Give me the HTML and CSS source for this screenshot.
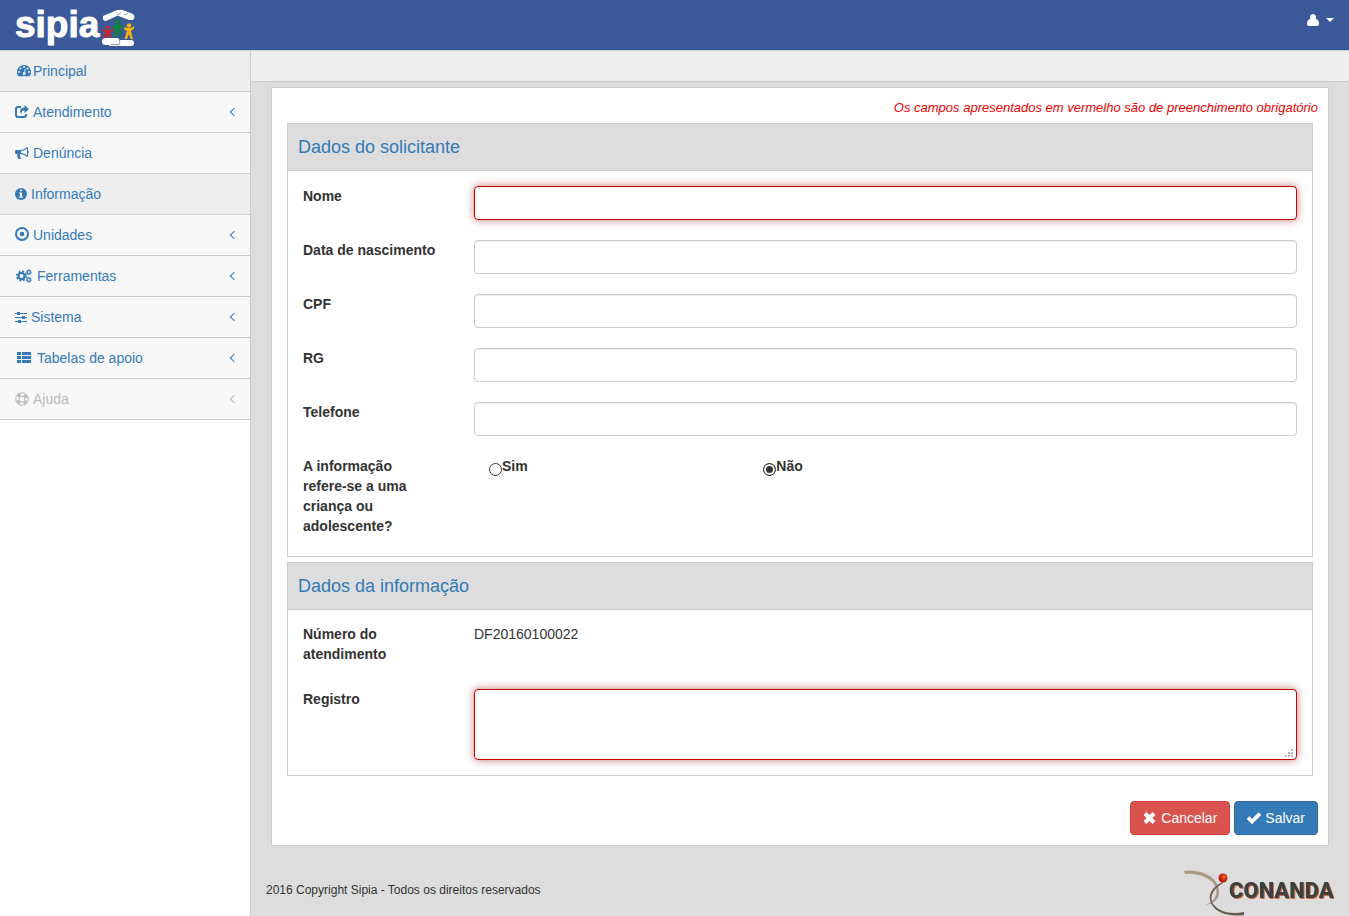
FILE: index.html
```html
<!DOCTYPE html>
<html lang="pt-BR">
<head>
<meta charset="utf-8">
<meta name="viewport" content="width=device-width, initial-scale=1">
<title>Sipia - Informação</title>
<link rel="stylesheet" href="styles.css">
</head>
<body>
<header class="navbar">
  <a class="brand" href="#" aria-label="Sipia">
    <svg width="122" height="50" viewBox="0 0 122 50">
      <text class="brand-text" x="0" y="37">sipia</text>
      <path fill="#fff" d="M88 16 101 10.500Q105 9 106 12L104 15 91 21Q87 21 88 16Z"/>
      <path fill="#fff" d="M102 11Q106 9 109 10.500L118 14Q121 17 118 20L114 20 101 15Z"/>
      <path fill="none" stroke="#3b5998" stroke-width=".6" d="M102 15.500 106 12.500M109 15 113 13.500"/>
      <circle fill="#c1272d" cx="92.500" cy="27.500" r="2"/>
      <path fill="#c1272d" d="M87 29 91 30H95L99 28.500 99 30.500 95 32 97 37.500H94.500L93 35 91 38H88L90.500 32 87 31Z"/>
      <circle fill="#108040" cx="102.500" cy="21.500" r="2.500"/>
      <path fill="#108040" d="M101 24H104.500L109 27.500 108 29 105 28 106 37H103.500L102.500 31 101 37H98.500L100 28 96.500 29 96 27.500Z"/>
      <circle fill="#f0b310" cx="114" cy="25.500" r="2.200"/>
      <path fill="#f0b310" d="M112.500 28H116L119 26V28.500L116 31 118 39H115.500L114 34 112 39H109.500L112 31 109 29.500 109.500 27Z"/>
      <rect fill="#fff" x="87" y="38" width="18" height="7" rx="3.500"/>
      <path fill="#fff" d="M103 40H116Q119 40 119 43T116 46H96Q94 46 94 45H103Z"/>
      <path fill="none" stroke="#3b5998" stroke-width=".6" d="M104 39.500Q106 42 104 44.500H96"/>
    </svg>
  </a>
  <button class="user" type="button" aria-label="Menu do usuário">
    <svg width="12" height="14" viewBox="0 0 12 14"><path fill="currentColor" d="M6 1a3.200 3.200 0 0 1 2.600 5c2.400.2 3.400 2.300 3.400 4.800 0 1.300-.7 2.200-1.900 2.200H1.900C.7 13 0 12.100 0 10.800 0 8.300 1 6.200 3.400 6A3.200 3.200 0 0 1 6 1Z"/></svg>
    <svg width="8" height="4" viewBox="0 0 8 4"><path fill="currentColor" d="M0 0h8L4 4Z"/></svg>
  </button>
</header>
<div class="wrapper">
  <nav class="sidebar" aria-label="Principal">
    <ul class="menu">
      <li><a class="item active" href="#"><svg class="wide" width="18" height="14" viewBox="-2 0 18 14"><path fill="currentColor" fill-rule="evenodd" d="M7 1a7 7 0 0 0-5.900 10.800q.3.400.6.400h10.600q.4 0 .6-.4A7 7 0 0 0 7 1ZM2 7a1 1 0 1 0 0 2 1 1 0 0 0 0-2Zm1.500-3.500a1 1 0 1 0 0 2 1 1 0 0 0 0-2ZM7 2a1 1 0 1 0 0 2 1 1 0 0 0 0-2Zm3.500 1.500a1 1 0 1 0 0 2 1 1 0 0 0 0-2ZM12 7a1 1 0 1 0 0 2 1 1 0 0 0 0-2ZM7.900 4.800 7.200 8a1.500 1.500 0 1 0 .9.300l.7-3.200Z"/></svg>Principal</a></li>
      <li><a class="item" href="#"><svg width="14" height="14" viewBox="0 0 14 14"><path fill="none" stroke="currentColor" stroke-width="2" d="M6 2H3Q1 2 1 4v6q0 2 2 2h6q2 0 2-2V9"/><path fill="currentColor" d="m9.500 0 4.500 4-4.500 4V5.500C7 5.500 6 6.800 6.800 9.300 4 6.800 4.500 2.500 9.500 2.500Z"/></svg><span>Atendimento</span><i class="angle"></i></a></li>
      <li><a class="item" href="#"><svg width="14" height="14" viewBox="0 0 14 14"><path fill="currentColor" fill-rule="evenodd" d="M13 5V2q0-1-1-1C10 2.800 8 4 5 4H1.200Q0 4 0 5.200v1.600Q0 8 1.200 8h1.200c-.4 1.500 0 3 .6 4.400.7.700 2.300.8 3.200 0-1-.8-1.400-1.500-.8-2.300-.7-.7-.7-1.300-.1-2C8 8.300 10 9.300 12 11q1 0 1-1V7q1 0 1-1t-1-1ZM12 9.600C10.200 8.200 8.200 7.300 6 7.100V4.900C8.200 4.700 10.200 3.800 12 2.400Z"/></svg><span>Denúncia</span></a></li>
      <li><a class="item active" href="#"><svg width="12" height="14" viewBox="0 0 12 14"><circle fill="currentColor" cx="6" cy="7" r="6"/><path fill="#eee" d="M5 2.500h2v1.800H5ZM4 5.500h3v4h1v1.300H4V9.500h1V6.800H4Z"/></svg><span>Informação</span></a></li>
      <li><a class="item" href="#"><svg width="14" height="14" viewBox="0 0 14 14"><circle fill="none" stroke="currentColor" stroke-width="2" cx="7" cy="6" r="6"/><circle fill="currentColor" cx="7" cy="6" r="2.300"/></svg><span>Unidades</span><i class="angle"></i></a></li>
      <li><a class="item" href="#"><svg width="18" height="14" viewBox="-1 0 18 14"><circle fill="none" stroke="currentColor" stroke-width="2" cx="5.500" cy="7" r="3"/><circle fill="none" stroke="currentColor" stroke-width="2" stroke-dasharray="2 1.530" cx="5.500" cy="7" r="4.500"/><g fill="none" stroke="currentColor"><circle stroke-width="1.300" cx="12.800" cy="3.200" r="1.600"/><circle stroke-width="1.300" cx="12.800" cy="10.800" r="1.600"/><circle stroke-width="1" stroke-dasharray="1.200 1" cx="12.800" cy="3.200" r="2.500"/><circle stroke-width="1" stroke-dasharray="1.200 1" cx="12.800" cy="10.800" r="2.500"/></g></svg><span>Ferramentas</span><i class="angle"></i></a></li>
      <li><a class="item" href="#"><svg width="12" height="14" viewBox="0 0 12 14"><path fill="currentColor" d="M0 3h12v1H0ZM0 7h12v1H0ZM0 11h12v1H0ZM2 2h3v3H2ZM7 6h3v3H7ZM3 10h3v3H3Z"/></svg><span>Sistema</span><i class="angle"></i></a></li>
      <li><a class="item" href="#"><svg width="18" height="14" viewBox="-2 0 18 14"><path fill="currentColor" d="M0 1h4v3H0ZM5 1h9v3H5ZM0 5h4v3H0ZM5 5h9v3H5ZM0 9h4v3H0ZM5 9h9v3H5Z"/></svg><span>Tabelas de apoio</span><i class="angle"></i></a></li>
      <li><a class="item disabled" href="#" aria-disabled="true"><svg width="14" height="14" viewBox="0 0 14 14"><g fill="none" stroke="currentColor"><circle cx="7" cy="7" r="6.300"/><circle cx="7" cy="7" r="3"/><circle cx="7" cy="7" r="4.700" stroke-width="3" stroke-dasharray="3.690 3.690" stroke-dashoffset="-1.850"/></g></svg><span>Ajuda</span><i class="angle"></i></a></li>
    </ul>
  </nav>
  <div class="page">
    <div class="strip"></div>
    <main class="card">
      <p class="hint">Os campos apresentados em vermelho são de preenchimento obrigatório</p>
      <form>
        <section class="panel">
          <h2 class="panel-title">Dados do solicitante</h2>
          <div class="panel-body">
            <div class="row"><label for="nome">Nome</label><input class="control required" id="nome" type="text"></div>
            <div class="row"><label for="nascimento">Data de nascimento</label><input class="control" id="nascimento" type="text"></div>
            <div class="row"><label for="cpf">CPF</label><input class="control" id="cpf" type="text"></div>
            <div class="row"><label for="rg">RG</label><input class="control" id="rg" type="text"></div>
            <div class="row"><label for="telefone">Telefone</label><input class="control" id="telefone" type="text"></div>
            <div class="row" role="radiogroup" aria-labelledby="crianca">
              <span class="label" id="crianca">A informação refere-se a uma criança ou adolescente?</span>
              <div class="options">
                <label class="option"><input type="radio" name="crianca" value="sim">Sim</label>
                <label class="option"><input type="radio" name="crianca" value="nao" checked>Não</label>
              </div>
            </div>
          </div>
        </section>
        <section class="panel">
          <h2 class="panel-title">Dados da informação</h2>
          <div class="panel-body compact">
            <div class="row"><span class="label">Número do atendimento</span><span>DF20160100022</span></div>
            <div class="row"><label for="registro">Registro</label><textarea class="control required" id="registro"></textarea></div>
          </div>
        </section>
        <div class="actions">
          <button class="btn danger" type="button"><svg width="14" height="14" viewBox="0 0 14 14"><path stroke="currentColor" stroke-width="4" d="m2 2.500 9 9m0-9-9 9"/></svg>Cancelar</button>
          <button class="btn primary" type="submit"><svg width="14" height="14" viewBox="0 0 14 14"><path fill="none" stroke="currentColor" stroke-width="3.800" d="m1 6.500 4 4 8-8"/></svg>Salvar</button>
        </div>
      </form>
    </main>
    <footer class="footer">
      <span>2016 Copyright Sipia - Todos os direitos reservados</span>
      <svg width="150" height="46" viewBox="0 0 150 46" role="img" aria-label="Conanda">
        <defs><radialGradient id="ball" cx=".6" cy=".4"><stop offset="0" stop-color="#ff9a3c"/><stop offset=".5" stop-color="#dc2a14"/><stop offset="1" stop-color="#b51b10"/></radialGradient></defs>
        <path fill="#a89982" d="M0 1C16-1 33 5 35 20 36 30 29 34 21 35 29 32 34 26 32 18 29 8 14 3 1 4Z"/>
        <path fill="#685a4c" d="M39 13C29 19 24 28 30 35 37 43 48 44 60 42V45C45 47 33 43 28 35 22 25 29 16 39 12Z"/>
        <circle cx="39" cy="8" r="4.500" fill="url(#ball)"/>
        <text class="conanda" x="45" y="28">CONANDA</text>
      </svg>
    </footer>
  </div>
</div>
</body>
</html>
```

FILE: styles.css
```css
* { box-sizing: border-box; }

body {
  margin: 0;
  min-height: 100vh;
  display: flex;
  flex-direction: column;
  background: #fff;
  color: #333;
  font: 14px/20px "Liberation Sans", Arial, sans-serif;
}

.navbar {
  display: flex;
  justify-content: space-between;
  height: 51px;
  padding: 0 15px;
  background: #3b5998;
  border-bottom: 1px solid #ccc;
}

.brand { display: block; height: 50px; }
.brand svg { display: block; }
.brand-text {
  font: 700 37px "Liberation Sans", Arial, sans-serif;
  fill: #fff;
  stroke: #fff;
  stroke-width: 1px;
  stroke-linejoin: round;
}

.user {
  display: flex;
  align-items: center;
  gap: 7px;
  height: 40px;
  padding: 0;
  border: 0;
  background: none;
  color: #fff;
}

.wrapper { flex: 1; display: flex; }

.sidebar { flex: 0 0 250px; }
.menu { margin: 0; padding: 0; list-style: none; }
.item {
  display: flex;
  align-items: center;
  gap: 4px;
  padding: 10px 13px 10px 15px;
  border-bottom: 1px solid #ccc;
  background: #f8f8f8;
  color: #337ab7;
  text-decoration: none;
}
.item.active { background: #eee; }
.item.disabled { color: #bbb; }
.item svg { flex: none; overflow: visible; }
.item .wide { margin-right: -4px; }
.angle {
  width: 6px;
  height: 6px;
  margin: 0 0 0 auto;
  border: solid currentColor;
  border-width: 0 0 1px 1px;
  transform: rotate(45deg);
}

.page {
  flex: 1;
  min-width: 0;
  display: flex;
  flex-direction: column;
  background: #ddd;
  border-left: 1px solid #ccc;
}
.strip {
  height: 31px;
  background: #eee;
  border-bottom: 1px solid #ccc;
}

.card {
  margin: 5px 20px 0;
  padding: 10px 15px;
  background: #fff;
  border: 1px solid #ccc;
}
.hint {
  margin: 0 -5px 5px 0;
  color: #e00;
  font-size: 13px;
  font-style: italic;
  text-align: right;
}

.panel {
  margin-bottom: 5px;
  border: 1px solid #ccc;
}
.panel-title {
  margin: 0;
  padding: 13px 10px;
  background: #ddd;
  border-bottom: 1px solid #ccc;
  color: #337ab7;
  font-size: 18px;
  font-weight: 400;
}
.panel-body {
  display: flex;
  flex-direction: column;
  gap: 20px;
  padding: 15px 15px 20px;
}
.compact { gap: 25px; padding: 14px 15px 15px; }

.row {
  display: grid;
  grid-template-columns: 141px minmax(0, 1fr);
  column-gap: 30px;
}
.row label, .label { font-weight: 700; }
.label { padding-right: 10px; }

.control {
  display: block;
  width: 100%;
  height: 34px;
  padding: 6px 12px;
  border: 1px solid #ccc;
  border-radius: 4px;
  background: #fff;
  color: #555;
  font: inherit;
  box-shadow: inset 0 1px 1px rgba(0, 0, 0, .075);
}
.control.required {
  border-color: #c00;
  box-shadow: 0 0 8px rgba(150, 30, 30, .6);
}
textarea.control { height: 71px; resize: vertical; }
textarea.control::-webkit-resizer {
  background:
    linear-gradient(#bbb, #bbb) 10px 5px / 2px 2px no-repeat,
    linear-gradient(#bbb, #bbb) 7px 8px / 2px 2px no-repeat,
    linear-gradient(#bbb, #bbb) 10px 8px / 2px 2px no-repeat,
    linear-gradient(#bbb, #bbb) 4px 11px / 2px 2px no-repeat,
    linear-gradient(#bbb, #bbb) 7px 11px / 2px 2px no-repeat,
    linear-gradient(#bbb, #bbb) 10px 11px / 2px 2px no-repeat;
}

.options {
  display: grid;
  grid-template-columns: repeat(3, 1fr);
}
.option {
  display: flex;
  align-items: flex-start;
  padding-left: 15px;
}
.option input {
  appearance: none;
  width: 13px;
  height: 13px;
  margin: 7px 0 0;
  border: 1px solid #333;
  border-radius: 50%;
  background: #fff;
}
.option input:checked {
  background: #333;
  box-shadow: inset 0 0 0 2px #fff;
}

.actions {
  display: flex;
  justify-content: flex-end;
  gap: 4px;
  margin: 25px -5px 0 0;
}
.btn {
  display: flex;
  align-items: center;
  gap: 4px;
  height: 34px;
  padding: 0 12px;
  border: 1px solid;
  border-radius: 4px;
  color: #fff;
  font: inherit;
}
.danger { background: #d9534f; border-color: #d43f3a; }
.primary { background: #337ab7; border-color: #2e6da4; }

.footer {
  display: flex;
  align-items: center;
  justify-content: space-between;
  margin-top: 24px;
  padding: 0 15px;
  font-size: 12px;
}
.footer > span { padding-bottom: 6px; }
.footer svg { display: block; }
.conanda {
  font: 900 22px Roboto, sans-serif;
  fill: #3c4240;
  filter: drop-shadow(1px 1px 0 #d2683c);
}
```
